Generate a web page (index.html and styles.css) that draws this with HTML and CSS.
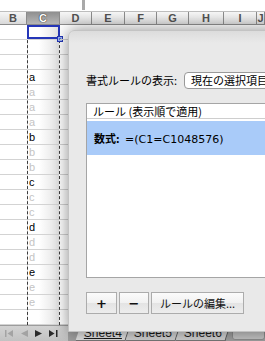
FILE: index.html
```html
<!DOCTYPE html>
<html lang="ja">
<head>
  <meta charset="UTF-8" />
  <title>条件付き書式</title>
  <link rel="stylesheet" href="styles.css">
</head>
<body>
  <div class="screen">
    <div class="topbar"><span class="topbar-mark"></span></div>

    <div class="col-heads">
      <div class="col-head" style="width:27px">B</div>
      <div class="col-head is-selected" style="width:33px">C</div>
      <div class="col-head" style="width:32px">D</div>
      <div class="col-head" style="width:33px">E</div>
      <div class="col-head" style="width:32px">F</div>
      <div class="col-head" style="width:32px">G</div>
      <div class="col-head" style="width:35px">H</div>
      <div class="col-head" style="width:33px">I</div>
      <div class="col-head col-rest">J</div>
    </div>

    <div class="sheet">
      <div class="col col-b" id="colB"></div>
      <div class="col col-c" id="colC"></div>
      <div class="col col-d" id="colD"></div>
    </div>

    <div class="tabbar">
      <div class="tab-nav">
        <svg class="nav-btn is-off" width="9" height="7" viewBox="0 0 9 7"><rect x="0" y="0" width="1.5" height="7"/><polygon points="8,0 8,7 2.5,3.5"/></svg>
        <svg class="nav-btn is-off" width="7" height="7" viewBox="0 0 7 7"><polygon points="7,0 7,7 0,3.5"/></svg>
        <svg class="nav-btn" width="7" height="7" viewBox="0 0 7 7"><polygon points="0,0 0,7 7,3.5"/></svg>
        <svg class="nav-btn" width="9" height="7" viewBox="0 0 9 7"><polygon points="0,0 0,7 5.5,3.5"/><rect x="7" y="0" width="1.5" height="7"/></svg>
      </div>
      <div class="tabs">
        <div class="tab is-active"><span>Sheet4</span></div>
        <div class="tab"><span>Sheet5</span></div>
        <div class="tab"><span>Sheet6</span></div>
        <div class="hscroll"></div>
      </div>
    </div>

    <div class="dialog">
      <div class="dlg-row">
        <span class="dlg-label">書式ルールの表示:</span>
        <div class="popup">現在の選択項目</div>
      </div>

      <div class="rule-list">
        <div class="list-head">ルール (表示順で適用)</div>
        <div class="rule"><b>数式:</b> =(C1=C1048576)</div>
      </div>

      <div class="dlg-buttons">
        <button class="btn btn-icon">+</button>
        <button class="btn btn-icon">&minus;</button>
        <button class="btn btn-edit">ルールの編集...</button>
      </div>
    </div>
  </div>

  <script>
    // rows: a x4, b..e x3, first of each group is the real value
    const letters = ["", "", "", "a", "a", "a", "a", "b", "b", "b", "c", "c", "c",
                     "d", "d", "d", "e", "e", "e", ""];
    const firsts = [3, 7, 10, 13, 16];

    function fillColumn(id, withText) {
      const col = document.getElementById(id);
      letters.forEach((letter, i) => {
        const cell = document.createElement("div");
        cell.className = "cell";
        if (withText) {
          cell.textContent = letter;
          if (letter && !firsts.includes(i)) cell.classList.add("is-ghost");
          if (i === 0) {
            cell.classList.add("is-active");
            cell.innerHTML = '<span class="sel-box"></span><span class="fill-handle"></span>';
          }
        }
        col.appendChild(cell);
      });
    }

    fillColumn("colB", false);
    fillColumn("colC", true);
    fillColumn("colD", false);
  </script>
</body>
</html>
```

FILE: styles.css
```css
* {
  box-sizing: border-box;
}
body {
  margin: 0;
  font-family: "Liberation Sans", Arial, sans-serif;
  background: #fff;
}
.screen {
  position: relative;
  width: 265px;
  height: 341px;
  overflow: hidden;
}

/* formula bar remnant */
.topbar {
  height: 12px;
  background: #fff;
  border-bottom: 1px solid #bdbdbd;
  padding-left: 82px;
}
.topbar-mark {
  display: block;
  width: 3px;
  height: 10px;
  background: #a9a9a9;
}

/* column headers */
.col-heads {
  display: flex;
  height: 13px;
  border-bottom: 1px solid #8c8c8c;
}
.col-head {
  flex: none;
  height: 12px;
  border-right: 1px solid #8a8a8a;
  background: linear-gradient(#f6f6f6, #d9d9d9);
  color: #505050;
  font-size: 11px;
  font-weight: bold;
  line-height: 12px;
  text-align: center;
}
.col-head.is-selected {
  background: linear-gradient(#8f8f8f, #b6b6b6);
  color: #fff;
  text-shadow: 0 0 1px #222, 0 0 1px #222;
}
.col-rest {
  flex: 1;
}

/* cells */
.sheet {
  display: flex;
  height: 300px;
}
.col {
  flex: none;
}
.col-b {
  width: 27px;
}
.col-c {
  width: 33px;
  border-left: 1px dashed #3c3c3c;
  border-right: 1px dashed #3c3c3c;
  background: linear-gradient(to right, #fff 35%, #e2e2e2);
}
.col-d {
  flex: 1;
}
.cell {
  position: relative;
  height: 15px;
  border-bottom: 1px solid #d3d3d3;
  padding-left: 1px;
  font-size: 11px;
  line-height: 14px;
  color: #000;
}
.cell.is-ghost {
  color: #c4c4c4;
}
.sel-box {
  position: absolute;
  left: -1px;
  right: -1px;
  top: 0;
  bottom: 0;
  border: 2px solid #2536b8;
}
.fill-handle {
  position: absolute;
  right: -4px;
  bottom: -3px;
  width: 6px;
  height: 6px;
  background: #4c6fd6;
  border: 1px solid #2536b8;
  box-shadow: inset 0 0 0 1px #9fb4ee;
}

/* sheet tabs */
.tabbar {
  display: flex;
  height: 16px;
}
.tab-nav {
  width: 68px;
  display: flex;
  align-items: center;
  gap: 7px;
  padding-left: 5px;
  background: linear-gradient(#d2d2d2, #c2c2c2);
  border-top: 1px solid #9c9c9c;
}
.nav-btn {
  fill: #2a2a2a;
}
.nav-btn.is-off {
  fill: #a3a3a3;
}
.tabs {
  flex: 1;
  display: flex;
  padding-left: 10px;
  background: #9f9f9f;
}
.tab {
  width: 50px;
  padding: 2px 0 0 6px;
  background: #d0d0d0;
  border-right: 1px solid #555;
  border-bottom: 1px solid #777;
  transform: skewX(-18deg);
  font-size: 12px;
  line-height: 13px;
  color: #1a1a1a;
}
.tab span {
  display: inline-block;
  transform: skewX(18deg);
}
.tab.is-active {
  background: #dedede;
}
.tab.is-active span {
  text-decoration: underline;
}
.hscroll {
  flex: 1;
  margin: 2px 0 1px 4px;
  background: #c3c3c3;
  border: 1px solid #8e8e8e;
  border-radius: 3px;
}

/* conditional formatting dialog */
.dialog {
  position: absolute;
  left: 68px;
  top: 30px;
  width: 240px;
  height: 302px;
  padding: 41px 0 0 17px;
  background: linear-gradient(#dcdcdc, #e9e9e9 12px);
  border: 1px solid #c3c3c3;
  border-radius: 6px 0 0 0;
  box-shadow: 0 0 16px rgba(0, 0, 0, 0.45);
  font-family: "DejaVu Sans", "Noto Sans CJK JP", sans-serif;
  font-size: 11px;
  color: #000;
}
.dlg-row {
  display: flex;
  align-items: center;
  height: 17px;
}
.dlg-label {
  width: 98px;
  flex: none;
  font-family: "Noto Sans CJK JP", sans-serif;
  line-height: 17px;
}
.popup {
  flex: 1;
  height: 17px;
  padding-left: 6px;
  background: #fff;
  border: 1px solid #999;
  border-radius: 4px;
  font-family: "Noto Sans CJK JP", sans-serif;
  line-height: 15px;
  white-space: nowrap;
  overflow: hidden;
}
.rule-list {
  margin-top: 14px;
  height: 175px;
  background: #fff;
  border: 1px solid #a5a5a5;
}
.list-head {
  height: 15px;
  padding-left: 6px;
  border-bottom: 1px solid #cecece;
  font-family: "Noto Sans CJK JP", sans-serif;
  line-height: 14px;
}
.rule {
  margin-top: 2px;
  height: 34px;
  padding-left: 7px;
  background: #a9cbf9;
  line-height: 34px;
  white-space: nowrap;
}
.rule b {
  font-family: "Noto Sans CJK JP", sans-serif;
  margin-right: 2px;
}
.dlg-buttons {
  display: flex;
  gap: 2px;
  margin-top: 14px;
}
.btn {
  height: 22px;
  padding: 0;
  background: linear-gradient(#fbfbfb, #f1f1f1 50%, #e3e3e3 50%, #ededed);
  border: 1px solid #acacac;
  border-radius: 0;
  font-family: "Noto Sans CJK JP", sans-serif;
  font-size: 11px;
  color: #111;
}
.btn-icon {
  width: 31px;
  font-family: "DejaVu Sans", sans-serif;
  font-size: 13px;
  font-weight: bold;
}
.btn-icon + .btn-icon {
  width: 30px;
}
.btn-edit {
  width: 93px;
}
```
